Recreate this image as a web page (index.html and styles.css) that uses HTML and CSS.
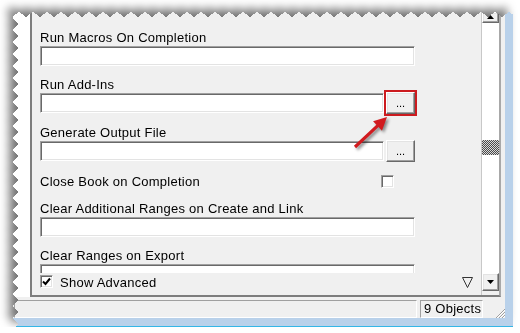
FILE: index.html
```html
<!DOCTYPE html>
<html lang="en">

<head>
    <meta charset="UTF-8">
    <title>Object Properties</title>
    <link rel="stylesheet" href="styles.css">
</head>

<body>
    <div class="torn">
        <div class="sheet">
            <div class="client">
                <div class="main">
                    <div class="gutter"></div>
                    <div class="pane">
                        <div class="panel">
                            <div class="props">
                                <div class="field">
                                    <div class="field-label">Run Macros On Completion</div>
                                    <div class="field-input">
                                        <div class="textbox wide"></div>
                                    </div>
                                </div>
                                <div class="field">
                                    <div class="field-label">Run Add-Ins</div>
                                    <div class="field-input">
                                        <div class="textbox"></div>
                                        <div class="browse marked">...</div>
                                    </div>
                                </div>
                                <div class="field">
                                    <div class="field-label">Generate Output File</div>
                                    <div class="field-input">
                                        <div class="textbox"></div>
                                        <div class="browse">...</div>
                                    </div>
                                </div>
                                <div class="field check-field">
                                    <div class="field-label">Close Book on Completion</div>
                                    <span class="checkbox"></span>
                                </div>
                                <div class="field">
                                    <div class="field-label">Clear Additional Ranges on Create and Link</div>
                                    <div class="field-input">
                                        <div class="textbox wide"></div>
                                    </div>
                                </div>
                                <div class="field">
                                    <div class="field-label">Clear Ranges on Export</div>
                                    <div class="field-input">
                                        <div class="textbox wide"></div>
                                    </div>
                                </div>
                            </div>

                            <div class="panel-footer">
                                <span class="checkbox">
                                    <svg viewBox="0 0 11 11">
                                        <polyline points="2,5.5 4.5,8 9,2.5" fill="none" stroke="#000" stroke-width="2" />
                                    </svg>
                                </span>
                                <span class="footer-label">Show Advanced</span>
                                <svg class="filter-icon" viewBox="0 0 11 11">
                                    <polygon points="0.5,0.5 10.5,0.5 5.5,10.5" fill="none" stroke="#333" stroke-width="1" />
                                </svg>
                            </div>

                            <!-- callout arrow pointing at the Add-Ins button -->
                            <svg class="callout" viewBox="0 0 45 45">
                                <polygon points="37,5 31.97,18.63 28.6,15.07 6.09,36.17 3.91,33.83 26.4,12.73 23.06,9.15" fill="#d11b1f" />
                            </svg>
                        </div>

                        <div class="scrollbar">
                            <div class="scroll-btn up">
                                <svg viewBox="0 0 7 4"><polygon points="0,4 7,4 3.5,0" fill="#000" /></svg>
                            </div>
                            <div class="track">
                                <div class="thumb"></div>
                            </div>
                            <div class="scroll-btn down">
                                <svg viewBox="0 0 7 4"><polygon points="0,0 7,0 3.5,4" fill="#000" /></svg>
                            </div>
                        </div>
                    </div>
                </div>

                <div class="statusbar">
                    <div class="status-pane"></div>
                    <div class="status-pane count">9 Objects</div>
                    <svg class="grip" viewBox="0 0 10 10">
                        <path d="M10 1L1 10M10 4L4 10M10 7L7 10" stroke="#a0a0a0" stroke-width="1" />
                        <path d="M10 2L2 10M10 5L5 10M10 8L8 10" stroke="#fff" stroke-width="1" />
                    </svg>
                </div>
            </div>
        </div>
    </div>
</body>

</html>
```

FILE: styles.css
```css
* {
    margin: 0;
    padding: 0;
    box-sizing: border-box;
}

body {
    background-color: #ffffff;
    color: #000000;
    font-family: "Liberation Sans", Arial, sans-serif;
    font-size: 13px;
    letter-spacing: 0.25px;
    padding: 12px 0 0 12px;
    overflow: hidden;
}

/* torn paper edge with shadow */
.torn {
    width: 501px;
    height: 315px;
    filter: drop-shadow(-6px -5px 5px rgba(0, 0, 0, 0.55));
}

.sheet {
    width: 100%;
    height: 100%;
    display: flex;
    background: #b9d1ea;
    padding: 0 8px 8px 0;
    border-bottom: 1px solid #35b6e6;
    -webkit-mask:
        conic-gradient(from 125deg at 50% 0, #000 110deg, #0000 0) 0 0 / 14px 5px repeat-x,
        conic-gradient(from 45deg at 0 50%, #000 90deg, #0000 0) 0 0 / 6px 12px repeat-y,
        linear-gradient(#000 0 0) 6px 5px / 100% 100% no-repeat;
    mask:
        conic-gradient(from 125deg at 50% 0, #000 110deg, #0000 0) 0 0 / 14px 5px repeat-x,
        conic-gradient(from 45deg at 0 50%, #000 90deg, #0000 0) 0 0 / 6px 12px repeat-y,
        linear-gradient(#000 0 0) 6px 5px / 100% 100% no-repeat;
}

.client {
    flex: 1;
    display: flex;
    flex-direction: column;
    background: #f0f0f0;
}

.main {
    height: 285px;
    display: flex;
}

.gutter {
    width: 18px;
    background: #ffffff;
}

.pane {
    flex: 1;
    display: flex;
    margin-right: 4px;
    border-left: 2px solid #7d7d7d;
    border-bottom: 2px solid #7d7d7d;
    border-right: 2px solid #a8a8a8;
}

.panel {
    position: relative;
    flex: 1;
    display: flex;
    flex-direction: column;
    background: #f0f0f0;
}

.props {
    flex: 1;
    overflow: hidden;
    padding: 18px 0 0 8px;
}

.field {
    width: 375px;
    margin-bottom: 11px;
}

.field-label {
    height: 15px;
    line-height: 15px;
    margin-bottom: 1px;
    white-space: nowrap;
}

.field-input {
    display: flex;
    gap: 2px;
}

.textbox {
    width: 344px;
    height: 20px;
    background: #ffffff;
    border: 1px solid;
    border-color: #a0a0a0 #ffffff #ffffff #a0a0a0;
    box-shadow: inset 1px 1px 0 #696969, inset -1px -1px 0 #e3e3e3;
}

.textbox.wide {
    width: 375px;
}

.browse {
    position: relative;
    width: 29px;
    height: 22px;
    margin-top: -1px;
    background: #f0f0f0;
    border: 1px solid;
    border-color: #ffffff #696969 #696969 #ffffff;
    box-shadow: inset -1px -1px 0 #a0a0a0, inset 1px 1px 0 #e3e3e3;
    text-align: center;
    font-size: 11px;
    letter-spacing: 0;
    line-height: 20px;
}

.browse.marked::after {
    content: "";
    position: absolute;
    top: -3px;
    left: -3px;
    right: -3px;
    bottom: -3px;
    border: 2px solid #cc1b1f;
}

.check-field {
    display: flex;
    align-items: center;
    height: 17px;
}

.checkbox {
    display: block;
    width: 13px;
    height: 13px;
    background: #ffffff;
    border: 1px solid;
    border-color: #a0a0a0 #ffffff #ffffff #a0a0a0;
    box-shadow: inset 1px 1px 0 #696969, inset -1px -1px 0 #e3e3e3;
}

.checkbox svg {
    display: block;
    width: 11px;
    height: 11px;
}

.check-field .checkbox {
    margin-left: auto;
    margin-right: 21px;
}

.panel-footer {
    height: 22px;
    display: flex;
    align-items: flex-start;
    padding: 2px 8px 0 8px;
}

.footer-label {
    margin-left: 7px;
    line-height: 15px;
}

.filter-icon {
    width: 11px;
    height: 11px;
    margin: 2px 0 0 auto;
}

.callout {
    position: absolute;
    left: 318px;
    top: 100px;
    width: 45px;
    height: 45px;
    overflow: visible;
    filter: drop-shadow(2px 2px 1.5px rgba(0, 0, 0, 0.45));
}

/* vertical scrollbar */
.scrollbar {
    width: 18px;
    display: flex;
    flex-direction: column;
    padding-bottom: 4px;
    border-left: 1px solid #c8c8c8;
}

.scroll-btn {
    display: flex;
    justify-content: center;
    background: #f0f0f0;
    border: 1px solid;
    border-color: #ffffff #696969 #696969 #ffffff;
    box-shadow: inset -1px -1px 0 #a0a0a0, inset 1px 1px 0 #e3e3e3;
}

.scroll-btn svg {
    width: 7px;
    height: 4px;
}

.scroll-btn.up {
    height: 11px;
    align-items: flex-start;
    padding-top: 2px;
}

.scroll-btn.down {
    height: 18px;
    align-items: center;
}

.track {
    flex: 1;
    background: #ffffff;
}

.thumb {
    height: 15px;
    margin-top: 117px;
    background: repeating-conic-gradient(#4a4a4a 0 25%, #d8d8d8 0 50%) 0 0 / 2px 2px;
}

/* status bar */
.statusbar {
    height: 21px;
    display: flex;
    gap: 3px;
    padding: 3px 0 0 2px;
}

.status-pane {
    flex: 1;
    height: 18px;
    border: 1px solid;
    border-color: #a0a0a0 #ffffff #ffffff #a0a0a0;
}

.status-pane.count {
    flex: none;
    width: 63px;
    padding-left: 3px;
    line-height: 15px;
    white-space: nowrap;
}

.grip {
    width: 10px;
    height: 10px;
    margin-left: 9px;
    align-self: flex-end;
}
```
